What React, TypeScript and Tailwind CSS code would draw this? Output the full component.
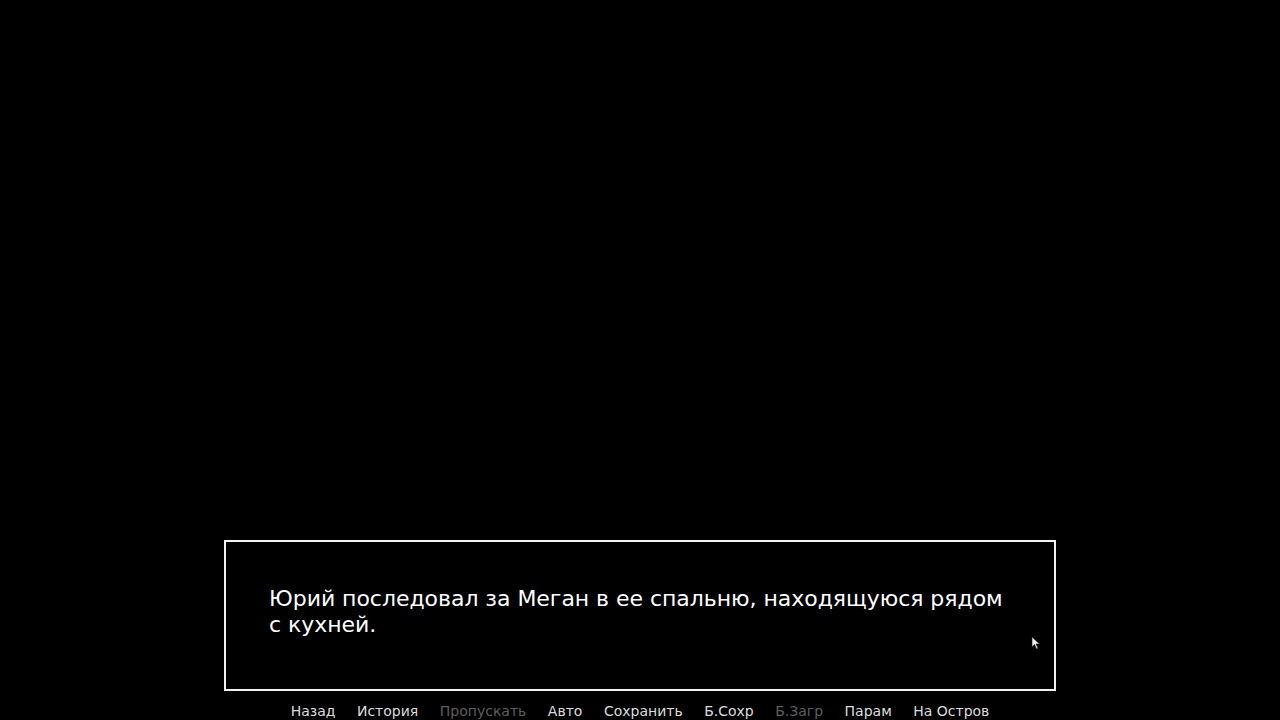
import React from "react";

type MenuItem = {
  label: string;
  disabled?: boolean;
};

const menu: MenuItem[] = [
  { label: "Назад" },
  { label: "История" },
  { label: "Пропускать", disabled: true },
  { label: "Авто" },
  { label: "Сохранить" },
  { label: "Б.Сохр" },
  { label: "Б.Загр", disabled: true },
  { label: "Парам" },
  { label: "На Остров" },
];

const Cursor: React.FC = () => (
  <svg
    className="absolute left-[805px] top-[94px]"
    width="10"
    height="14"
    viewBox="0 0 10 14"
  >
    <path
      d="M1 1 L1 11 L3.5 8.5 L5.5 13 L7 12.3 L5 8 L8.5 8 Z"
      fill="#eeeeee"
      stroke="#222222"
      strokeWidth="0.6"
    />
  </svg>
);

const App: React.FC = () => {
  return (
    <div
      className="w-[1280px] h-[720px] bg-black flex flex-col items-center justify-end overflow-hidden"
      style={{ fontFamily: '"DejaVu Sans", sans-serif' }}
    >
      <div className="relative w-[832px] h-[151px] border-2 border-[#f2f2f2] pt-[44px] px-[43px]">
        <p className="text-[22px] leading-[26px] tracking-[-0.04px] text-white">
          Юрий последовал за Меган в ее спальню, находящуюся рядом с кухней.
        </p>
        <Cursor />
      </div>

      <div className="h-[29px] flex items-start justify-center gap-[21.5px] pt-[10px] text-[14px] leading-[20px]">
        {menu.map((item) => (
          <span
            key={item.label}
            className={item.disabled ? "text-[#5e5e5e]" : "text-[#dcdcdc]"}
          >
            {item.label}
          </span>
        ))}
      </div>
    </div>
  );
};

export default App;
